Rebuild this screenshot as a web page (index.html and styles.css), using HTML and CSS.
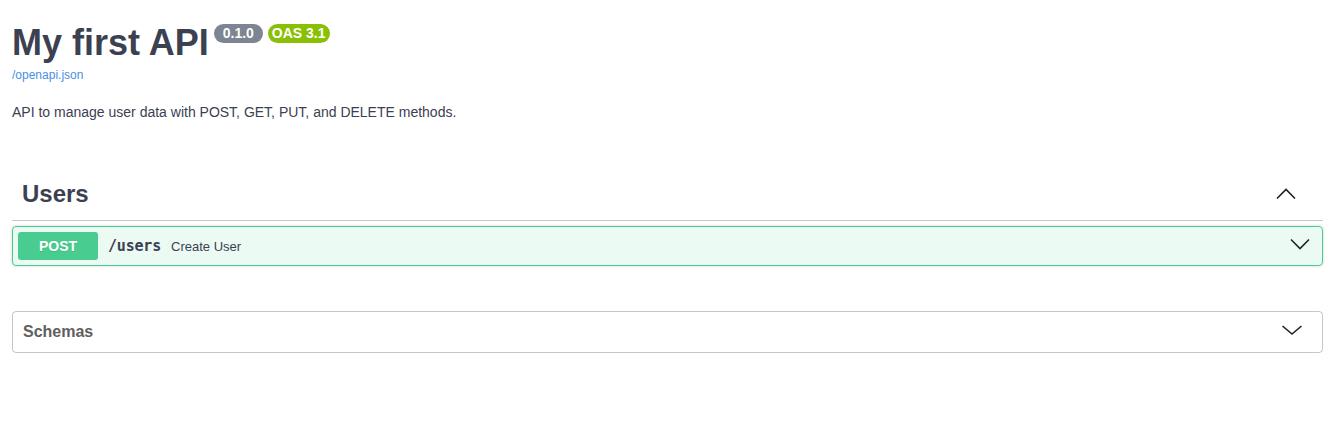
FILE: index.html
```html
<!DOCTYPE html>
<html lang="en">
<head>
<meta charset="utf-8">
<title>My first API</title>
<link rel="stylesheet" href="styles.css">
</head>
<body>
<div class="wrapper">
  <div class="info">
    <h2 class="title">My first API
      <span class="badge badge-version">0.1.0</span>
      <span class="badge badge-oas">OAS 3.1</span>
    </h2>
    <a class="spec-link" href="#">/openapi.json</a>
    <p class="description">API to manage user data with POST, GET, PUT, and DELETE methods.</p>
  </div>

  <section class="tag-section">
    <h3 class="tag-heading">
      <span class="tag-name">Users</span>
      <svg class="chevron chevron-up" width="24" height="24" viewBox="0 0 24 24"><polyline points="3,16.5 12,7.5 21,16.5"/></svg>
    </h3>
    <div class="opblock opblock-post">
      <div class="opblock-summary">
        <span class="method">POST</span>
        <span class="path">/users</span>
        <span class="summary-desc">Create User</span>
        <svg class="chevron chevron-op" width="24" height="24" viewBox="0 0 24 24"><polyline points="3,5.5 12,14.5 21,5.5"/></svg>
      </div>
    </div>
  </section>

  <section class="models">
    <h4 class="models-heading">
      <span class="models-title">Schemas</span>
      <svg class="chevron chevron-models" width="24" height="20" viewBox="0 0 24 20"><polyline points="2.5,4 12,12 21.5,4"/></svg>
    </h4>
  </section>
</div>
</body>
</html>
```

FILE: styles.css
```css
html, body {
  margin: 0;
  padding: 0;
  background: #fff;
}

body {
  font-family: "Liberation Sans", Arial, sans-serif;
  color: #3b4151;
}

.wrapper {
  padding: 0 10px 0 12px;
}

.info {
  padding-top: 23px;
}

.title {
  margin: 0;
  display: flex;
  align-items: flex-start;
  font-size: 36px;
  line-height: 40px;
  font-weight: 700;
  color: #3b4151;
}

.badge {
  margin-top: 1px;
  margin-left: 5px;
  font-size: 14px;
  line-height: 15px;
  font-weight: 700;
  color: #fff;
  border-radius: 57px;
  padding: 2px 4px;
}

.badge-version {
  background: #7d8492;
  padding: 2px 9px;
}

.badge-oas {
  background: #89bf04;
  padding: 2px 4px;
}

.spec-link {
  display: block;
  margin-top: 5px;
  font-size: 12px;
  line-height: 14px;
  color: #4990e2;
  text-decoration: none;
}

.description {
  margin: 22px 0 0;
  font-size: 14px;
  line-height: 16px;
  color: #3b4151;
}

.tag-section {
  margin-top: 48px;
}

.tag-heading {
  margin: 0;
  display: flex;
  align-items: center;
  min-height: 32px;
  padding: 10px 25px 10px 10px;
  border-bottom: 1px solid rgba(59, 65, 81, 0.3);
  font-size: 24px;
  font-weight: 700;
  color: #3b4151;
}

.tag-name {
  flex: 1 1 auto;
}

.chevron {
  flex: none;
  fill: none;
  stroke: #222;
  stroke-width: 1.6;
}

.opblock {
  margin: 5px 0 0;
  border: 1px solid #49cc90;
  border-radius: 4px;
  background: rgba(73, 204, 144, 0.1);
  box-shadow: 0 0 3px rgba(0, 0, 0, 0.19);
}

.opblock-summary {
  display: flex;
  align-items: center;
  padding: 5px;
}

.method {
  min-width: 80px;
  padding: 6px 0;
  font-size: 14px;
  line-height: 16px;
  font-weight: 700;
  text-align: center;
  color: #fff;
  background: #49cc90;
  border-radius: 3px;
  text-shadow: 0 1px 0 rgba(0, 0, 0, 0.1);
}

.path {
  padding: 0 10px;
  font-family: "DejaVu Sans Mono", "Liberation Mono", monospace;
  font-size: 15px;
  letter-spacing: -0.2px;
  font-weight: 700;
  color: #3b4151;
}

.summary-desc {
  flex: 1 1 auto;
  font-size: 13px;
  color: #3b4151;
}

.chevron-op {
  margin-right: 5px;
}

.models {
  margin: 45px 0 30px;
  border: 1px solid rgba(59, 65, 81, 0.3);
  border-radius: 4px;
}

.models-heading {
  margin: 0;
  display: flex;
  align-items: center;
  padding: 10px 18px 10px 10px;
  font-size: 16px;
  line-height: 20px;
  font-weight: 700;
  color: #606060;
}

.models-title {
  flex: 1 1 auto;
}
```
